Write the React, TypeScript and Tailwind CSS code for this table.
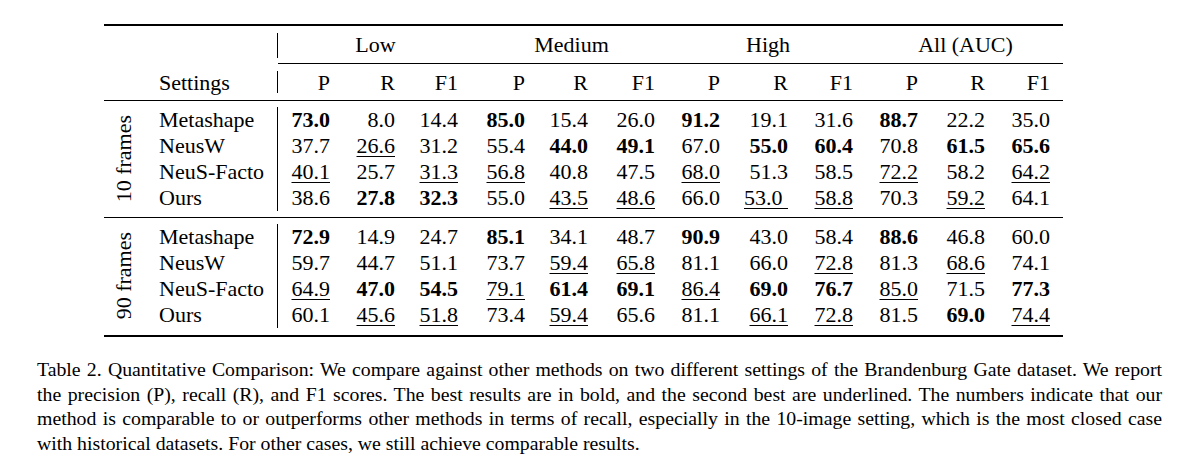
const colW = [
  'w-[52px]', 'w-[65px]', 'w-[63px]',
  'w-[67px]', 'w-[63px]', 'w-[67px]',
  'w-[65px]', 'w-[68px]', 'w-[65px]',
  'w-[65px]', 'w-[67px]', 'w-[65px]',
]

const groups = [
  { label: 'Low', cls: 'w-[180px] pl-[15px]' },
  { label: 'Medium', cls: 'w-[197px] pl-[30px]' },
  { label: 'High', cls: 'w-[198px] pl-[28px]' },
  { label: 'All (AUC)', cls: 'w-[197px] pl-[28px]' },
]

const metrics = ['P', 'R', 'F1', 'P', 'R', 'F1', 'P', 'R', 'F1', 'P', 'R', 'F1']

// suffix: b = bold (best), u = underlined (second best), x = underlined with trailing space
const blocks = [
  {
    label: '10 frames',
    rows: [
      { name: 'Metashape', v: ['73.0b', '8.0', '14.4', '85.0b', '15.4', '26.0', '91.2b', '19.1', '31.6', '88.7b', '22.2', '35.0'] },
      { name: 'NeusW', v: ['37.7', '26.6u', '31.2', '55.4', '44.0b', '49.1b', '67.0', '55.0b', '60.4b', '70.8', '61.5b', '65.6b'] },
      { name: 'NeuS-Facto', v: ['40.1u', '25.7', '31.3u', '56.8u', '40.8', '47.5', '68.0u', '51.3', '58.5', '72.2u', '58.2', '64.2u'] },
      { name: 'Ours', v: ['38.6', '27.8b', '32.3b', '55.0', '43.5u', '48.6u', '66.0', '53.0x', '58.8u', '70.3', '59.2u', '64.1'] },
    ],
  },
  {
    label: '90 frames',
    rows: [
      { name: 'Metashape', v: ['72.9b', '14.9', '24.7', '85.1b', '34.1', '48.7', '90.9b', '43.0', '58.4', '88.6b', '46.8', '60.0'] },
      { name: 'NeusW', v: ['59.7', '44.7', '51.1', '73.7', '59.4u', '65.8u', '81.1', '66.0', '72.8u', '81.3', '68.6u', '74.1'] },
      { name: 'NeuS-Facto', v: ['64.9u', '47.0b', '54.5b', '79.1u', '61.4b', '69.1b', '86.4u', '69.0b', '76.7b', '85.0u', '71.5', '77.3b'] },
      { name: 'Ours', v: ['60.1', '45.6u', '51.8u', '73.4', '59.4u', '65.6', '81.1', '66.1u', '72.8u', '81.5', '69.0b', '74.4u'] },
    ],
  },
]

const caption = [
  'Table 2. Quantitative Comparison: We compare against other methods on two different settings of the Brandenburg Gate dataset. We report',
  'the precision (P), recall (R), and F1 scores. The best results are in bold, and the second best are underlined. The numbers indicate that our',
  'method is comparable to or outperforms other methods in terms of recall, especially in the 10-image setting, which is the most closed case',
]

function Value({ raw }: { raw: string }) {
  const flag = /[bux]$/.test(raw) ? raw.slice(-1) : ''
  const num = flag ? raw.slice(0, -1) : raw
  if (flag === 'b') return <span className="font-bold">{num}</span>
  if (flag === 'u' || flag === 'x')
    return (
      <span className="underline decoration-1 underline-offset-[3px]">
        {flag === 'x' ? num + '\u00a0' : num}
      </span>
    )
  return <span>{num}</span>
}

export default function App() {
  return (
    <div className="h-[473px] w-[1200px] bg-white font-['Liberation_Serif',serif] text-black">
      <div className="ml-[104px] w-[959px] pt-[24px] text-[22px]">
        <div className="h-[2px] bg-black" />

        <div className="flex">
          <div className="w-[173px]" />
          <div className="h-[25px] w-px self-center bg-black" />
          <div className="flex h-[38px] flex-1 items-center border-b border-black">
            {groups.map((g) => (
              <div key={g.label} className={`text-center ${g.cls}`}>
                {g.label}
              </div>
            ))}
          </div>
        </div>

        <div className="flex h-[36px] items-center">
          <div className="w-[173px] pl-[55px]">Settings</div>
          <div className="h-[22px] w-px bg-black" />
          {metrics.map((m, i) => (
            <div key={i} className={`text-right ${colW[i]}`}>
              {m}
            </div>
          ))}
        </div>

        <div className="h-px bg-black" />

        {blocks.map((b, bi) => (
          <div key={b.label}>
            {bi > 0 && <div className="h-px bg-black" />}
            <div className={`flex ${bi === 0 ? 'py-[6px]' : 'pt-[6px] pb-[7px]'}`}>
              <div className="flex w-[46px] items-center justify-center pr-[6px]">
                <span className="rotate-180 leading-none [writing-mode:vertical-rl]">{b.label}</span>
              </div>
              <div className="w-[127px] pl-[9px]">
                {b.rows.map((r) => (
                  <div key={r.name} className="h-[26px] leading-[26px]">
                    {r.name}
                  </div>
                ))}
              </div>
              <div className="border-l border-black">
                {b.rows.map((r) => (
                  <div key={r.name} className="flex h-[26px] leading-[26px]">
                    {r.v.map((v, i) => (
                      <div key={i} className={`text-right ${colW[i]}`}>
                        <Value raw={v} />
                      </div>
                    ))}
                  </div>
                ))}
              </div>
            </div>
          </div>
        ))}

        <div className="h-[2px] bg-black" />
      </div>

      <div className="ml-[37px] mt-[20px] w-[1125px] text-[19.8px] leading-[24.5px]">
        {caption.map((line, i) => (
          <div key={i} className="text-justify [text-align-last:justify]">
            {line}
          </div>
        ))}
        <div>with historical datasets. For other cases, we still achieve comparable results.</div>
      </div>
    </div>
  )
}
